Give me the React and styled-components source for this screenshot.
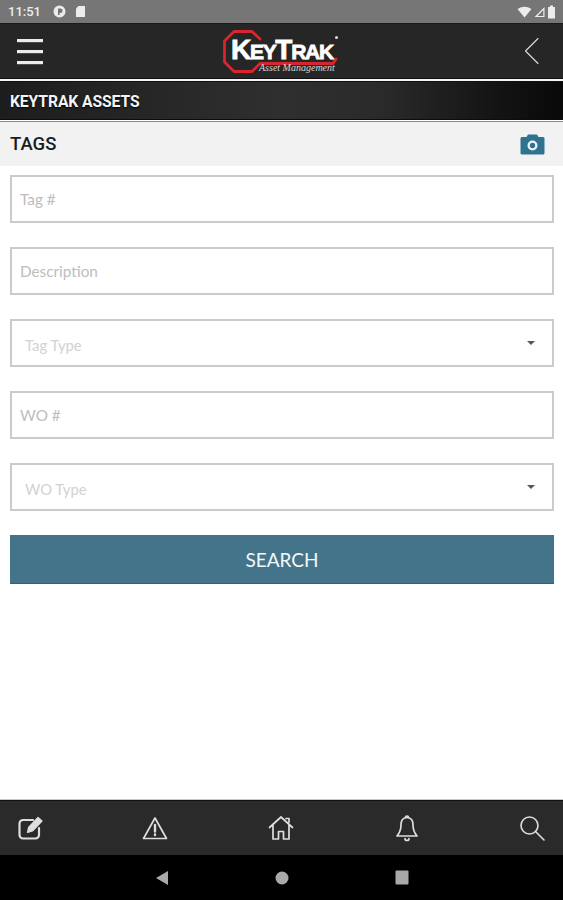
import React from 'react';
import styled, {createGlobalStyle} from 'styled-components';

const GlobalStyle = createGlobalStyle`
  html, body {
    margin: 0;
    padding: 0;
    background: #fff;
  }
  * { box-sizing: border-box; }
`;

const Screen = styled.div`
  display: flex;
  flex-direction: column;
  width: 563px;
  height: 900px;
  overflow: hidden;
  font-family: Lato, sans-serif;
  background: #fff;
`;

const StatusBar = styled.div`
  display: flex;
  align-items: center;
  justify-content: space-between;
  height: 23px;
  padding: 0 7px 0 8px;
  background: #767676;
  color: #ececec;
`;

const StatusGroup = styled.div`
  display: flex;
  align-items: center;
  gap: ${({$gap}) => $gap}px;
`;

const Clock = styled.span`
  font: 500 13px Roboto, sans-serif;
  margin-right: 6px;
`;

const TopBar = styled.header`
  display: flex;
  align-items: center;
  justify-content: space-between;
  height: 55px;
  padding: 0 24px 0 17px;
  background: #262626;
  border-top: 1px solid #1a1a1a;
`;

const Divider = styled.div`
  height: 4px;
  background: #111;
  border-top: 1px solid #111;
  &::after {
    content: '';
    display: block;
    height: 2px;
    background: #f4f4f4;
  }
`;

const Logo = styled.div`
  position: relative;
  width: 118px;
  height: 46px;
  margin-right: 8px;
`;

const LogoMark = styled.span`
  position: absolute;
  left: 10px;
  top: 9px;
  color: #fff;
  font: 700 28px/26px 'Liberation Sans', sans-serif;
  letter-spacing: -1.3px;
  -webkit-text-stroke: 0.8px #fff;
  white-space: nowrap;
  small { font-size: 21px; }
`;

const LogoReg = styled.span`
  position: absolute;
  right: 1px;
  top: 8px;
  width: 3px;
  height: 3px;
  border-radius: 50%;
  background: #ddd;
`;

const LogoTag = styled.span`
  position: absolute;
  left: 38px;
  top: 35px;
  color: #d8d8d8;
  font: italic 10px/10px 'Liberation Serif', serif;
  white-space: nowrap;
`;

const Banner = styled.div`
  display: flex;
  align-items: center;
  height: 38px;
  padding: 1px 0 0 10px;
  color: #f4f4f4;
  font: 700 15.7px Roboto, sans-serif;
  letter-spacing: -0.1px;
  text-shadow: 0 1px 2px #000;
  background: linear-gradient(90deg, #1d1d1d 0%, #262626 25%, #2f2f2f 50%, #2a2a2a 68%, #141414 88%, #090909 100%);
  border-bottom: 1px solid #0c0c0c;
`;

const SectionBar = styled.div`
  display: flex;
  align-items: center;
  justify-content: space-between;
  height: 45px;
  margin-top: 1px;
  padding: 0 18px 0 10px;
  background: #f2f2f2;
  border-top: 1px solid #8a8a8a;
`;

const SectionTitle = styled.h1`
  margin: 0;
  color: #1c1c1c;
  font: 500 18.5px Roboto, sans-serif;
`;

const Form = styled.form`
  display: flex;
  flex-direction: column;
  gap: 24px;
  flex: 1;
  padding: 9px 9px 0 10px;
`;

const Field = styled.div`
  display: flex;
  align-items: center;
  justify-content: space-between;
  height: 48px;
  padding: 0 8px;
  border: 2px solid #cbcbcb;
  background: #fff;
  color: #bdbdbd;
  font-size: 15.3px;
`;

const SelectField = styled(Field)`
  padding: 0 17px 0 13px;
  color: #d2d2d2;
  font-size: 14.8px;
`;

const SelectLabel = styled.span`
  padding-top: 4px;
`;

const Caret = styled.span`
  width: 0;
  height: 0;
  border-left: 4.5px solid transparent;
  border-right: 4.5px solid transparent;
  border-top: 4.5px solid #555;
`;

const SearchButton = styled.button`
  height: 49px;
  border: 0;
  background: #437489;
  color: #f4f8fa;
  font: 400 19px Lato, sans-serif;
  border-bottom: 1px solid #2f6276;
`;

const BottomBar = styled.nav`
  display: flex;
  align-items: center;
  justify-content: space-between;
  height: 55px;
  padding: 0 18px 0 18px;
  background: #2a2a2a;
  border-top: 1px solid #111;
  box-shadow: 0 -1px 0 #c8c8c8;
`;

const NavBar = styled.div`
  display: flex;
  align-items: center;
  justify-content: center;
  gap: 106px;
  height: 45px;
  background: #000;
`;

const Icon = styled.svg`
  display: block;
  fill: none;
  stroke: ${({$color}) => $color || '#dedede'};
  stroke-width: ${({$weight}) => $weight || 1.8};
  stroke-linecap: round;
  stroke-linejoin: round;
`;

const Filled = styled.svg`
  display: block;
  fill: ${({$color}) => $color || '#ececec'};
`;

const App = () => (
  <Screen>
    <GlobalStyle/>
    <StatusBar>
      <StatusGroup $gap={6}>
        <Clock>11:51</Clock>
        <Filled width="13" height="13" viewBox="0 0 13 13">
          <path fillRule="evenodd" d="M6.5 0.5a6 6 0 1 0 0 12a6 6 0 0 0 0-12zM5 3.5h2.4a2.2 2.2 0 0 1 0 4.4H6.6V10H5z"/>
        </Filled>
        <Filled width="11" height="13" viewBox="0 0 11 13" style={{marginLeft: 3}}>
          <path d="M3.5 1H10v11H1V3.500z"/>
        </Filled>
      </StatusGroup>
      <StatusGroup $gap={2}>
        <Filled width="15" height="12" viewBox="0 0 15 12">
          <path d="M0.5 3Q7.5 -1.5 14.5 3L7.5 11.5z"/>
        </Filled>
        <Filled width="11" height="12" viewBox="0 0 11 12">
          <path fillRule="evenodd" d="M10.5 1v10H0.5zM9.3 4L3.5 9.9h5.8z"/>
        </Filled>
        <Filled width="9" height="14" viewBox="0 0 9 14">
          <path d="M3 0.5h3v1.500h2v11.500H1V2h2z"/>
        </Filled>
      </StatusGroup>
    </StatusBar>
    <TopBar>
      <Filled width="27" height="27" viewBox="0 0 27 27">
        <rect y="1" width="26" height="3.2"/>
        <rect y="12" width="26" height="3.2"/>
        <rect y="23" width="26" height="3.2"/>
      </Filled>
      <Logo>
        <Icon width="118" height="46" viewBox="0 0 118 46" $color="#d8262c" $weight={2.8}>
          <path d="M39 11L31 3.500H13L3.500 13V34L13 43.500H31L39 35.500H112L115 31"/>
        </Icon>
        <LogoMark>K<small>EY</small>T<small>RAK</small></LogoMark>
        <LogoReg/>
        <LogoTag>Asset Management</LogoTag>
      </Logo>
      <Icon width="15" height="28" viewBox="0 0 15 28" $weight={1.1} $color="#dcdcdc">
        <path d="M14 1.500L1.500 14L14 26.500"/>
      </Icon>
    </TopBar>
    <Divider/>
    <Banner>KEYTRAK ASSETS</Banner>
    <SectionBar>
      <SectionTitle>TAGS</SectionTitle>
      <Filled width="25" height="21" viewBox="0 0 25 21" $color="#2f7391">
        <path fillRule="evenodd" d="M8 0.500h9l1.500 2.500H23a1.500 1.500 0 0 1 1.500 1.500V19a1.500 1.500 0 0 1-1.500 1.500H2A1.500 1.500 0 0 1 .5 19V4.500A1.500 1.500 0 0 1 2 3h4.500zM12.500 6.500a5 5 0 1 0 0 10a5 5 0 0 0 0-10zM12.500 8.800a2.700 2.700 0 1 1 0 5.400a2.700 2.700 0 0 1 0-5.400z"/>
      </Filled>
    </SectionBar>
    <Form>
      <Field>Tag #</Field>
      <Field>Description</Field>
      <SelectField><SelectLabel>Tag Type</SelectLabel><Caret/></SelectField>
      <Field>WO #</Field>
      <SelectField><SelectLabel>WO Type</SelectLabel><Caret/></SelectField>
      <SearchButton type="button">SEARCH</SearchButton>
    </Form>
    <BottomBar>
      <Icon width="26" height="26" viewBox="0 0 26 26" $weight={2.2}>
        <path d="M21 13V20a3.500 3.500 0 0 1-3.500 3.500H5A3.500 3.500 0 0 1 1.500 20V8.500A3.500 3.500 0 0 1 5 5H15"/>
        <path d="M9.500 17.500L10.500 12.500L20 2.500L24 6L14.500 16z" fill="#dedede" strokeWidth="1.200"/>
      </Icon>
      <Icon width="26" height="25" viewBox="0 0 26 25" $weight={1.7} style={{marginLeft: -2}}>
        <path d="M13 2L24.500 22.500H1.500z"/>
        <path d="M13 9V15.500M13 18.500V19" strokeWidth="2.400"/>
      </Icon>
      <Icon width="26" height="26" viewBox="0 0 26 26" $weight={1.7} style={{marginRight: 2}}>
        <path d="M1.500 12.500L13 2L24.500 12.500M5 10V24H10.500V16.500H15.500V24H21V10M18 3.500H21V7"/>
      </Icon>
      <Icon width="24" height="28" viewBox="0 0 24 28" $weight={1.7}>
        <path d="M12 3.500C7.500 3.500 6 7 6 11C6 16 4.500 19 2 22H22C19.500 19 18 16 18 11C18 7 16.500 3.500 12 3.500Z"/>
        <path d="M10.500 3.500a1.500 1.500 0 0 1 3 0M10 24.500a2 2 0 0 0 4 0"/>
      </Icon>
      <Icon width="26" height="26" viewBox="0 0 26 26" $weight={1.6}>
        <circle cx="10.500" cy="10.500" r="8.500"/>
        <path d="M16.500 16.500L25 25"/>
      </Icon>
    </BottomBar>
    <NavBar>
      <Filled width="14" height="16" viewBox="0 0 14 16" $color="#a9a9a9">
        <path d="M13 1V15L1 8z"/>
      </Filled>
      <Filled width="14" height="14" viewBox="0 0 14 14" $color="#a9a9a9">
        <circle cx="7" cy="7" r="6.500"/>
      </Filled>
      <Filled width="14" height="15" viewBox="0 0 14 15" $color="#a9a9a9">
        <rect x="0.500" y="0.500" width="13" height="14" rx="1"/>
      </Filled>
    </NavBar>
  </Screen>
);

export default App;
